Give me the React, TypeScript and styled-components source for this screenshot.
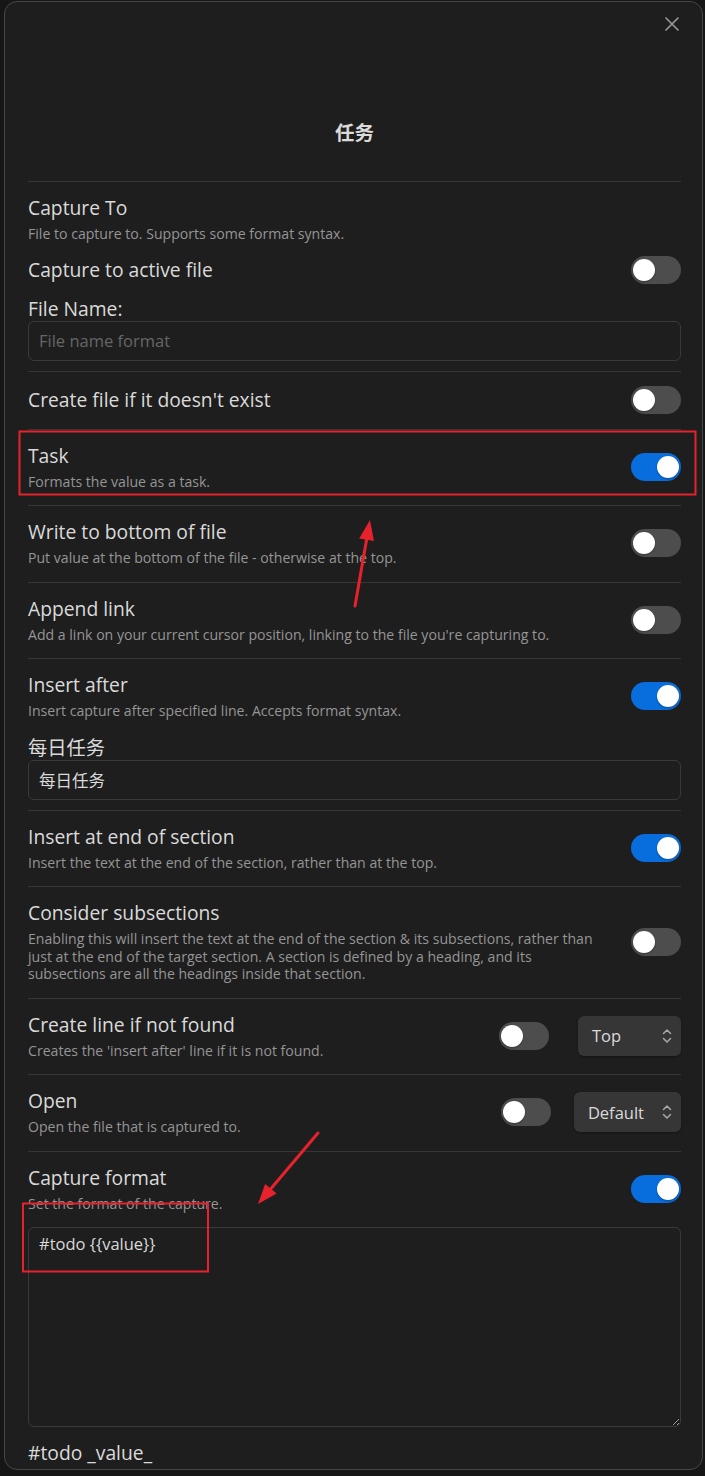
import React from "react";
import styled, { createGlobalStyle } from "styled-components";

const GlobalStyle = createGlobalStyle`
  html, body { margin: 0; padding: 0; background: #161616; }
  body {
    font-family: "Open Sans", "Noto Sans CJK SC", sans-serif;
    color: #dadada;
  }
  * { box-sizing: border-box; }
`;

const Page = styled.div`
  position: relative;
  width: 705px;
  min-height: 1476px;
  padding: 1px 0 0 4px;
`;

const Modal = styled.div`
  position: relative;
  width: 699px;
  background: #1e1e1e;
  border: 1px solid #474747;
  border-radius: 13px;
  padding: 117px 21px 2px 23px;
`;

const CloseButton = styled.button`
  position: absolute;
  top: 11px;
  right: 19px;
  width: 22px;
  height: 22px;
  padding: 0;
  border: none;
  background: transparent;
  display: flex;
  align-items: center;
  justify-content: center;
  color: #9a9a9a;
`;

const Title = styled.h2`
  margin: 0 0 34px;
  font-family: "Open Sans", "Noto Sans CJK SC", sans-serif;
  font-size: 19.5px;
  line-height: 28px;
  font-weight: 700;
  text-align: center;
  color: #dadada;
`;

type Variant = "default" | "head" | "sub";

const SettingItem = styled.div<{ $variant?: Variant }>`
  display: flex;
  align-items: center;
  gap: 24px;
  border-top: ${(p) => (p.$variant === "sub" ? "none" : "1px solid #363636")};
  padding: ${(p) =>
    p.$variant === "head" ? "14px 0 0" : p.$variant === "sub" ? "13px 0 0" : "14px 0 15px"};
`;

const Info = styled.div`
  flex: 1;
  min-width: 0;
`;

const Name = styled.div`
  font-size: 19.3px;
  line-height: 24px;
  color: #dadada;
`;

const Desc = styled.div`
  margin-top: 5px;
  font-size: 14.1px;
  line-height: 17.5px;
  color: #959595;
`;

const Controls = styled.div<{ $gap: number }>`
  display: flex;
  align-items: center;
  gap: ${(p) => p.$gap}px;
  flex-shrink: 0;
`;

const ToggleTrack = styled.div<{ $on: boolean }>`
  position: relative;
  width: 50px;
  height: 28px;
  border-radius: 14px;
  background: ${(p) => (p.$on ? "#086ddd" : "#4d4d4d")};
  flex-shrink: 0;
  &::before {
    content: "";
    position: absolute;
    top: 3px;
    left: ${(p) => (p.$on ? "26px" : "2px")};
    width: 22px;
    height: 22px;
    border-radius: 50%;
    background: #ffffff;
    box-shadow: 0 1px 2px rgba(0, 0, 0, 0.3);
  }
`;

const Dropdown = styled.div`
  display: inline-flex;
  align-items: center;
  justify-content: space-between;
  gap: 18px;
  min-width: 103px;
  height: 40px;
  padding: 0 9px 0 14px;
  border-radius: 6px;
  background: #363636;
  box-shadow: 0 1px 2px rgba(0, 0, 0, 0.35);
  font-size: 16.5px;
  color: #dadada;
`;

const FieldLabel = styled.div<{ $gap: number }>`
  margin-top: ${(p) => p.$gap}px;
  font-size: 19.3px;
  line-height: 24px;
  color: #dadada;
`;

const TextInput = styled.input`
  display: block;
  width: 100%;
  height: 40px;
  margin: 0 0 10px;
  padding: 0 10px;
  background: transparent;
  border: 1px solid #3a3a3a;
  border-radius: 6px;
  font-family: "Open Sans", "Noto Sans CJK SC", sans-serif;
  font-size: 16.5px;
  color: #dadada;
  outline: none;
  &::placeholder { color: #666666; }
`;

const TextArea = styled.textarea`
  display: block;
  width: 100%;
  height: 200px;
  margin: 0;
  padding: 5px 10px;
  background: transparent;
  border: 1px solid #3a3a3a;
  border-radius: 6px;
  font-family: "Open Sans", "Noto Sans CJK SC", sans-serif;
  font-size: 16.5px;
  line-height: 22px;
  color: #dadada;
  outline: none;
  resize: vertical;
  color-scheme: dark;
`;

const Preview = styled.div`
  margin-top: 12px;
  font-size: 19.3px;
  line-height: 28px;
  color: #dadada;
`;

const Overlay = styled.svg`
  position: absolute;
  top: 0;
  left: 0;
  pointer-events: none;
`;

const Toggle = ({ on }: { on: boolean }) => <ToggleTrack $on={on} />;

const Chevrons = () => (
  <svg width="10" height="16" viewBox="0 0 10 16" fill="none" stroke="#a8a8a8" strokeWidth="1.5" strokeLinecap="round" strokeLinejoin="round">
    <path d="M1.5 5.5 L5 2 L8.5 5.5" />
    <path d="M1.5 10.5 L5 14 L8.5 10.5" />
  </svg>
);

const Select = ({ value }: { value: string }) => (
  <Dropdown>
    <span>{value}</span>
    <Chevrons />
  </Dropdown>
);

type Row = { name: string; desc?: string; on: boolean; gap?: number };

const Setting = ({ name, desc, on, gap = 26, children }: Row & { children?: React.ReactNode }) => (
  <SettingItem>
    <Info>
      <Name>{name}</Name>
      {desc && <Desc>{desc}</Desc>}
    </Info>
    <Controls $gap={gap}>
      <Toggle on={on} />
      {children}
    </Controls>
  </SettingItem>
);

const Arrow = ({ x1, y1, x2, y2 }: { x1: number; y1: number; x2: number; y2: number }) => {
  const dx = x2 - x1;
  const dy = y2 - y1;
  const len = Math.hypot(dx, dy);
  const ux = dx / len;
  const uy = dy / len;
  const hl = 20;
  const hw = 7.5;
  const bx = x2 - ux * hl;
  const by = y2 - uy * hl;
  const px = -uy;
  const py = ux;
  return (
    <g>
      <line x1={x1} y1={y1} x2={bx + ux * 2} y2={by + uy * 2} stroke="#e8222d" strokeWidth="3" strokeLinecap="round" />
      <polygon
        points={`${x2},${y2} ${bx + px * hw},${by + py * hw} ${bx - px * hw},${by - py * hw}`}
        fill="#e8222d"
      />
    </g>
  );
};

export default function App() {
  return (
    <>
      <GlobalStyle />
      <Page>
        <Modal>
          <CloseButton aria-label="Close">
            <svg width="14" height="14" viewBox="0 0 14 14" stroke="currentColor" strokeWidth="1.6" strokeLinecap="round">
              <path d="M1 1 L13 13 M13 1 L1 13" />
            </svg>
          </CloseButton>
          <Title>任务</Title>

          <SettingItem $variant="head">
            <Info>
              <Name>Capture To</Name>
              <Desc>File to capture to. Supports some format syntax.</Desc>
            </Info>
          </SettingItem>
          <SettingItem $variant="sub">
            <Info>
              <Name>Capture to active file</Name>
            </Info>
            <Controls $gap={26}>
              <Toggle on={false} />
            </Controls>
          </SettingItem>
          <FieldLabel $gap={13}>File Name:</FieldLabel>
          <TextInput placeholder="File name format" readOnly />

          <Setting name="Create file if it doesn't exist" on={false} />
          <Setting name="Task" desc="Formats the value as a task." on={true} />
          <Setting name="Write to bottom of file" desc="Put value at the bottom of the file - otherwise at the top." on={false} />
          <Setting name="Append link" desc="Add a link on your current cursor position, linking to the file you're capturing to." on={false} />
          <Setting name="Insert after" desc="Insert capture after specified line. Accepts format syntax." on={true} />
          <FieldLabel $gap={1}>每日任务</FieldLabel>
          <TextInput defaultValue="每日任务" readOnly />

          <Setting name="Insert at end of section" desc="Insert the text at the end of the section, rather than at the top." on={true} />
          <Setting
            name="Consider subsections"
            desc="Enabling this will insert the text at the end of the section & its subsections, rather than just at the end of the target section. A section is defined by a heading, and its subsections are all the headings inside that section."
            on={false}
          />
          <Setting name="Create line if not found" desc="Creates the 'insert after' line if it is not found." on={false} gap={29}>
            <Select value="Top" />
          </Setting>
          <Setting name="Open" desc="Open the file that is captured to." on={false} gap={23}>
            <Select value="Default" />
          </Setting>
          <Setting name="Capture format" desc="Set the format of the capture." on={true} />
          <TextArea defaultValue="#todo {{value}}" readOnly />
          <Preview>#todo _value_</Preview>
        </Modal>

        <Overlay width="705" height="1476" viewBox="0 0 705 1476">
          <rect x="19.5" y="431.5" width="676" height="63" fill="none" stroke="#e8222d" strokeWidth="2" />
          <rect x="23" y="1203.5" width="185" height="68" fill="none" stroke="#e8222d" strokeWidth="2" />
          <Arrow x1={355} y1={606} x2={370} y2={520} />
          <Arrow x1={318} y1={1133} x2={258} y2={1204} />
        </Overlay>
      </Page>
    </>
  );
}
